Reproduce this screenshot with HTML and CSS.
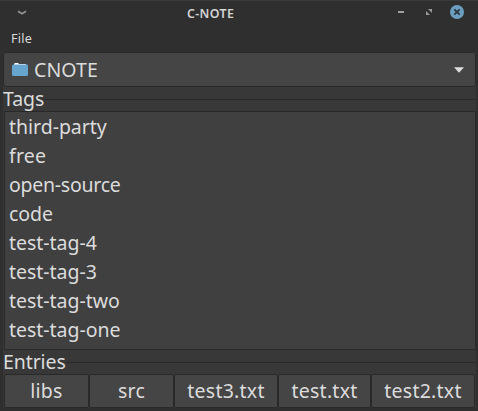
FILE: index.html
```html
<!DOCTYPE html>
<html lang="en">
<head>
<meta charset="utf-8">
<title>C-NOTE</title>
<link rel="stylesheet" href="styles.css">
</head>
<body>
<div class="window">
  <header class="titlebar">
    <svg class="menu-arrow" width="10" height="6" viewBox="0 0 10 6"><path d="M1 1.2 L5 3.7 L9 1.2" fill="none" stroke="#909090" stroke-width="1.9"/></svg>
    <h1 class="title">C-NOTE</h1>
    <svg class="controls" width="72" height="16" viewBox="0 0 72 16">
      <path d="M4 7h6v2H4z" fill="#a0a0a0"/>
      <path d="M34 5h4v4zM32 7v4h4z" fill="#999"/>
      <circle cx="63" cy="8" r="7" fill="#6a9fc0"/>
      <path d="M60.3 5.3l5.4 5.4M65.7 5.3l-5.4 5.4" stroke="#2d3439" stroke-width="1.8"/>
    </svg>
  </header>
  <nav class="menubar"><span class="menu">File</span></nav>
  <main class="content">
    <div class="combo">
      <svg width="16" height="14" viewBox="0 0 16 14"><path d="M2 2V1l1-1h3l1 1h7v1z" fill="#fff"/><path d="M1.5 1.600H15q1 0 1 1v8.900q0 1.500-1.500 1.500h-13Q0 13 0 11.500V3.100Q0 1.600 1.500 1.600z" fill="#66a6ce"/></svg>
      <span class="combo-text">CNOTE</span>
      <svg class="drop" width="10" height="6" viewBox="0 0 10 6"><path d="M0 .3h10L5 5.700z" fill="#dedede"/></svg>
    </div>
    <section class="group">
      <h2 class="legend"><span>Tags</span></h2>
      <ul class="list">
        <li>third-party</li>
        <li class="loose">free</li>
        <li class="tight">open-source</li>
        <li>code</li>
        <li>test-tag-4</li>
        <li>test-tag-3</li>
        <li>test-tag-two</li>
        <li>test-tag-one</li>
      </ul>
    </section>
    <section class="group">
      <h2 class="legend"><span>Entries</span></h2>
      <div class="entries">
        <button class="b1">libs</button>
        <button class="b2">src</button>
        <button class="b3">test3.txt</button>
        <button class="b4">test.txt</button>
        <button class="b5">test2.txt</button>
      </div>
    </section>
  </main>
</div>
</body>
</html>
```
FILE: styles.css
```css
* { box-sizing: border-box; }
body { margin: 0; background: #2f2f2f; color: #dcdcdc; font-family: "Noto Sans", sans-serif; }
.window { width: 478px; height: 411px; overflow: hidden; border-top: 1px solid #3a3a3a; background: #2f2f2f; }
.titlebar { display: flex; height: 25px; padding: 3px 12px 0 17px; align-items: flex-start; }
.menu-arrow { margin-top: 6px; }
.title { margin: 0 auto 0 160px; font-size: 12.4px; line-height: 19px; font-weight: 600; letter-spacing: 0.35px; color: #d4d4d4; }
.menubar { height: 26px; padding-left: 11px; font-size: 12.6px; line-height: 26px; letter-spacing: 0.2px; }
.content { margin: 0 2px 0 3px; background: #383838; height: 356px; }
.combo { display: flex; align-items: center; height: 35px; padding: 0 11px 0 8px; border: 1px solid #292929; border-radius: 3px; background: #454545; font-size: 19.5px; line-height: 33px; }
.combo-text { flex: 1; margin-left: 6px; letter-spacing: 0.1px; }
.legend { display: flex; align-items: center; height: 24px; margin: 0; font-size: 19.5px; line-height: 24px; font-weight: 400; letter-spacing: -0.1px; }
.legend::after { content: ""; flex: 1; height: 1px; background: #292929; }
.list { list-style: none; margin: 0 0 0 1px; padding: 0 0 0 4px; height: 239px; border: 1px solid #292929; background: #404040; font-size: 19.5px; line-height: 29px; }
.list li { height: 29px; letter-spacing: -0.03px; }
.list .loose { letter-spacing: 0.2px; }
.list .tight { letter-spacing: -0.25px; }
.entries { display: flex; margin-left: 1px; }
.entries button { height: 34px; padding: 0; border: 1px solid #292929; border-radius: 2px; background: #454545; color: #dcdcdc; font: 19.5px/32px "Noto Sans", sans-serif; letter-spacing: 0.25px; }
.b1, .b2 { width: 85px; }
.b3, .b5 { width: 104px; }
.b4 { width: 93px; }
```
